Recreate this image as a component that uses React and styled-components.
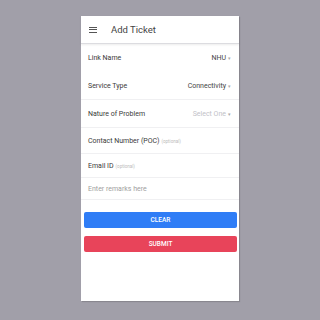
import React from 'react'
import styled, { createGlobalStyle } from 'styled-components'

const Global = createGlobalStyle`
  html, body {
    margin: 0;
    padding: 0;
    background: #a19fa9;
    font-family: Roboto, "Liberation Sans", sans-serif;
  }
  * { box-sizing: border-box; }
`

const Page = styled.div`
  width: 320px;
  height: 320px;
  display: flex;
  justify-content: center;
  padding-top: 16px;
`

const Phone = styled.div`
  width: 158px;
  height: 285px;
  background: #ffffff;
  display: flex;
  flex-direction: column;
  box-shadow: 1px 1px 1px rgba(0, 0, 0, 0.15);
`

const Header = styled.div`
  height: 28px;
  flex-shrink: 0;
  display: flex;
  align-items: center;
  padding-left: 8px;
  gap: 14px;
  border-bottom: 1px solid #dcdce0;
  box-shadow: 0 1px 2px rgba(0, 0, 0, 0.08);
`

const Burger = styled.div`
  width: 8px;
  display: flex;
  flex-direction: column;
  gap: 1.5px;
  span {
    height: 1px;
    background: #555;
  }
`

const Title = styled.div`
  font-size: 9.5px;
  color: #444;
`

const Row = styled.div`
  height: ${p => p.h}px;
  flex-shrink: 0;
  display: flex;
  align-items: center;
  justify-content: space-between;
  padding: 0 8px 0 7px;
  border-bottom: ${p => (p.line ? '1px solid #f0f0f2' : 'none')};
`

const Label = styled.div`
  font-size: 7px;
  color: ${p => (p.muted ? '#a0a0a0' : '#3a3a3a')};
`

const Optional = styled.span`
  font-size: 4.5px;
  color: #bbb;
  margin-left: 2px;
`

const Value = styled.div`
  font-size: 7px;
  color: ${p => (p.muted ? '#c2c2c8' : '#444')};
  display: flex;
  align-items: center;
  gap: 2px;
`

const Caret = styled.span`
  font-size: 5px;
  color: #aaa;
`

const Buttons = styled.div`
  display: flex;
  flex-direction: column;
  gap: 8px;
  padding: 12px 2px 0 3px;
`

const Btn = styled.div`
  height: 16px;
  border-radius: 2px;
  background: ${p => p.bg};
  color: #fff;
  font-size: 6.5px;
  font-weight: 500;
  display: flex;
  align-items: center;
  justify-content: center;
`

export default function App() {
  return (
    <Page>
      <Global />
      <Phone>
        <Header>
          <Burger><span /><span /><span /></Burger>
          <Title>Add Ticket</Title>
        </Header>
        <Row h={28}>
          <Label>Link Name</Label>
          <Value>NHU <Caret>▾</Caret></Value>
        </Row>
        <Row h={28} line>
          <Label>Service Type</Label>
          <Value>Connectivity <Caret>▾</Caret></Value>
        </Row>
        <Row h={28} line>
          <Label>Nature of Problem</Label>
          <Value muted>Select One <Caret>▾</Caret></Value>
        </Row>
        <Row h={26} line>
          <Label>Contact Number (POC)<Optional>(optional)</Optional></Label>
        </Row>
        <Row h={24} line>
          <Label>Email ID<Optional>(optional)</Optional></Label>
        </Row>
        <Row h={22} line>
          <Label muted>Enter remarks here</Label>
        </Row>
        <Buttons>
          <Btn bg="#2f7df6">CLEAR</Btn>
          <Btn bg="#e8445a">SUBMIT</Btn>
        </Buttons>
      </Phone>
    </Page>
  )
}
